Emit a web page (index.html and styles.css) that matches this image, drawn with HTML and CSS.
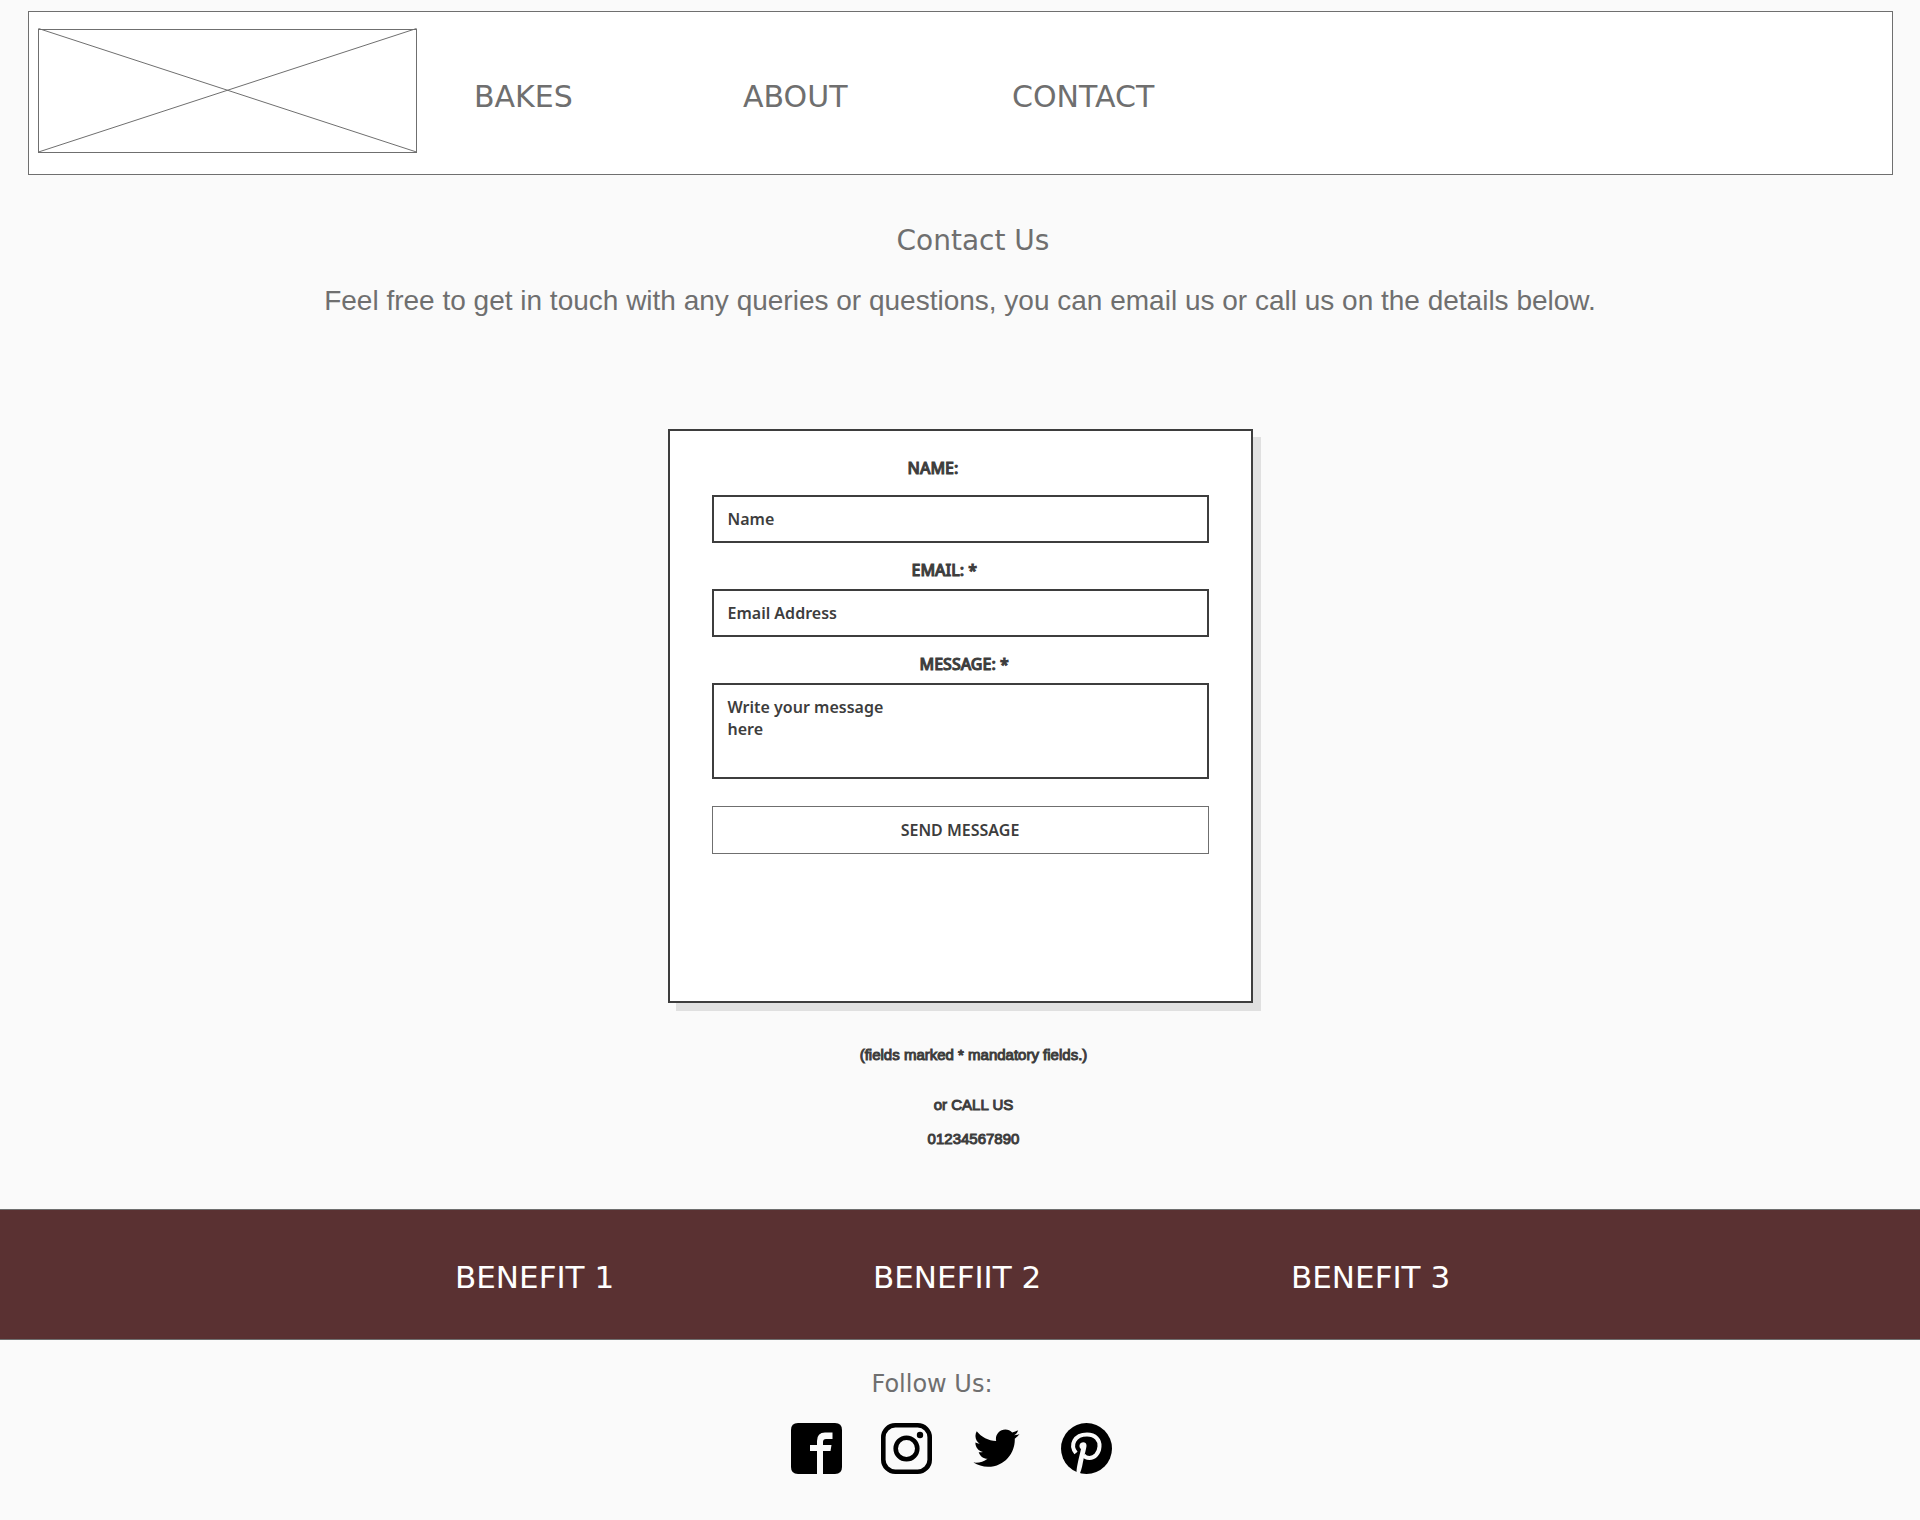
FILE: index.html
```html
<!DOCTYPE html>
<html lang="en">
<head>
<meta charset="utf-8">
<meta name="viewport" content="width=device-width, initial-scale=1">
<title>Contact Us</title>
<link rel="stylesheet" href="styles.css">
</head>
<body>
<header class="header">
  <svg class="logo" viewBox="0 0 380 125" role="img" aria-label="Logo">
    <rect x="0.5" y="1.5" width="378" height="123"/>
    <path d="M0.5 0.5L378.5 124M0.5 124L378.5 0.5"/>
  </svg>
  <nav class="nav">
    <a href="#bakes">BAKES</a>
    <a href="#about">ABOUT</a>
    <a href="#contact">CONTACT</a>
  </nav>
</header>

<main class="main">
  <h1 class="title">Contact Us</h1>
  <p class="intro">Feel free to get in touch with any queries or questions, you can email us or call us on the details below.</p>

  <form class="card">
    <label class="label label-name" for="name">NAME:</label>
    <input class="field" id="name" type="text" placeholder="Name">
    <label class="label label-email" for="email">EMAIL: *</label>
    <input class="field" id="email" type="email" placeholder="Email Address" required>
    <label class="label label-message" for="message">MESSAGE: *</label>
    <textarea class="field field-message" id="message" placeholder="Write your message&#10;here" required></textarea>
    <button class="send" type="submit">SEND MESSAGE</button>
  </form>

  <div class="notes">
    <p class="mandatory">(fields marked * mandatory fields.)</p>
    <p>or CALL US</p>
    <p>01234567890</p>
  </div>
</main>

<section class="benefits">
  <p>BENEFIT 1</p>
  <p>BENEFIIT 2</p>
  <p>BENEFIT 3</p>
</section>

<footer class="footer">
  <h2 class="follow">Follow Us:</h2>
  <div class="social">
    <a href="#facebook" aria-label="Facebook">
      <svg viewBox="0 0 51 51"><path d="M7 0H44Q51 0 51 7V44Q51 51 44 51H32V28H39.500L40.500 22H32V19Q32 16 35 16H41.500V9.500H34Q26 9.500 26 18V22H19V28H26V51H7Q0 51 0 44V7Q0 0 7 0Z"/></svg>
    </a>
    <a href="#instagram" aria-label="Instagram">
      <svg viewBox="0 0 51 51"><rect x="2.300" y="2.300" width="46.400" height="46.400" rx="12" fill="none" stroke="#000" stroke-width="4.600"/><circle cx="25.500" cy="25.500" r="10.800" fill="none" stroke="#000" stroke-width="4.600"/><circle cx="39" cy="12" r="3.200"/></svg>
    </a>
    <a href="#twitter" aria-label="Twitter">
      <svg viewBox="-28 -24 568 568"><path d="M459.370 151.716c.325 4.548.325 9.097.325 13.645 0 138.720-105.583 298.558-298.558 298.558-59.452 0-114.680-17.219-161.137-47.106 8.447.974 16.568 1.299 25.340 1.299 49.055 0 94.213-16.568 130.274-44.832-46.132-.975-84.792-31.188-98.112-72.772 6.498.974 12.995 1.624 19.818 1.624 9.421 0 18.843-1.300 27.614-3.573-48.081-9.747-84.143-51.980-84.143-102.985v-1.299c13.969 7.797 30.214 12.670 47.431 13.319-28.264-18.843-46.781-51.005-46.781-87.391 0-19.492 5.197-37.360 14.294-52.954 51.655 63.675 129.300 105.258 216.365 109.807-1.624-7.797-2.599-15.918-2.599-24.040 0-57.828 46.782-104.934 104.934-104.934 30.213 0 57.502 12.670 76.670 33.137 23.715-4.548 46.456-13.320 66.599-25.340-7.798 24.366-24.366 44.833-46.132 57.827 21.117-2.273 41.584-8.122 60.426-16.243-14.292 20.791-32.161 39.308-52.628 54.253z"/></svg>
    </a>
    <a href="#pinterest" aria-label="Pinterest">
      <svg viewBox="0 0 51 51"><circle cx="25.500" cy="25.500" r="25.500"/><path d="M15 30C8.500 22 13.500 11.500 26 11.500C34.500 11.500 39 17 38.500 23.500C38 30.500 33.500 35 28.500 35C25.500 35 23.500 33.700 22.500 32" fill="none" stroke="#fafafa" stroke-width="4"/><path d="M18.500 22.500C19 18.500 25.500 18 25.500 22.500C25.500 25 23.500 32 22.500 36.500C21.500 41 21 46 18.500 51.500L15.500 50C15.500 44 17.500 37 20 26C19 25.500 18.300 24 18.500 22.500Z" fill="#fafafa"/></svg>
    </a>
  </div>
</footer>
</body>
</html>
```
FILE: styles.css
```css
* {
  box-sizing: border-box;
}

body {
  margin: 0;
  background: #fafafa;
  color: #6f6f6f;
  font-family: Verdana, "DejaVu Sans", sans-serif;
}

h1,
h2,
p {
  margin: 0;
  font-weight: 400;
}

.header {
  display: flex;
  align-items: flex-start;
  gap: 56px;
  margin: 11px 27px 0 28px;
  padding: 16px 9px 21px;
  border: 1px solid #6f6f6f;
  background: #fff;
}

.logo {
  width: 380px;
  height: 125px;
  fill: none;
  stroke: #6f6f6f;
}

.nav {
  display: grid;
  grid-template-columns: repeat(3, 269px);
  padding-top: 49px;
  font-size: 30px;
  line-height: 40px;
}

.nav a {
  color: inherit;
  text-decoration: none;
}

.main {
  display: flex;
  flex-direction: column;
  align-items: center;
  padding: 46px 24px 58px;
}

.title {
  padding-left: 26px;
  font-size: 28px;
  line-height: 40px;
}

.intro {
  margin-top: 20px;
  font-family: "Liberation Sans", Arial, sans-serif;
  font-size: 28px;
  line-height: 40px;
  text-align: center;
}

.card {
  display: flex;
  flex-direction: column;
  width: 100%;
  max-width: 585px;
  margin-top: 108px;
  padding: 25px 42px 147px;
  border: 2px solid #3d3d3d;
  background: #fff;
  box-shadow: 8px 8px 0 #e0e0e0;
  color: #3d3d3d;
  font-family: "Noto Sans", sans-serif;
}

.label {
  margin-top: 15px;
  margin-bottom: 7px;
  font-size: 16px;
  font-weight: 500;
  line-height: 24px;
  -webkit-text-stroke: 1px #3d3d3d;
}

.label-name {
  margin-top: 0;
  margin-bottom: 15px;
  padding-left: 196px;
}

.label-email {
  padding-left: 200px;
}

.label-message {
  padding-left: 208px;
}

.field {
  width: 100%;
  height: 48px;
  padding: 0 14px;
  border: 2px solid #3d3d3d;
  border-radius: 0;
  background: #fff;
  color: #3d3d3d;
  font: 600 16px/22px "Noto Sans", sans-serif;
}

.field::placeholder {
  color: #3d3d3d;
  opacity: 1;
}

.field-message {
  height: 96px;
  padding-top: 11px;
  resize: none;
}

.send {
  height: 48px;
  margin-top: 27px;
  border: 1px solid #6f6f6f;
  background: #fff;
  color: #3d3d3d;
  font: 600 16px/22px "Noto Sans", sans-serif;
}

.notes {
  display: grid;
  gap: 10px;
  margin-top: 40px;
  padding-left: 27px;
  color: #3d3d3d;
  font-family: "Liberation Sans", Arial, sans-serif;
  font-size: 15px;
  line-height: 24px;
  text-align: center;
  -webkit-text-stroke: 1px #3d3d3d;
}

.mandatory {
  margin-bottom: 16px;
}

.benefits {
  display: grid;
  grid-template-columns: repeat(3, 418px);
  justify-content: center;
  padding: 47px 0 42px 244px;
  border: 1px solid #6f6f6f;
  border-width: 1px 0;
  background: #5a3132;
  color: #fff;
  font-size: 31px;
  line-height: 40px;
}

.footer {
  display: flex;
  flex-direction: column;
  align-items: center;
  padding: 28px 0 42px;
}

.follow {
  padding-right: 56px;
  font-size: 24px;
  line-height: 32px;
}

.social {
  display: flex;
  gap: 39px;
  margin-top: 23px;
  padding-right: 17px;
}

.social a {
  display: block;
  width: 51px;
  height: 51px;
  color: #000;
}

.social svg {
  display: block;
  width: 100%;
  height: 100%;
}
```
